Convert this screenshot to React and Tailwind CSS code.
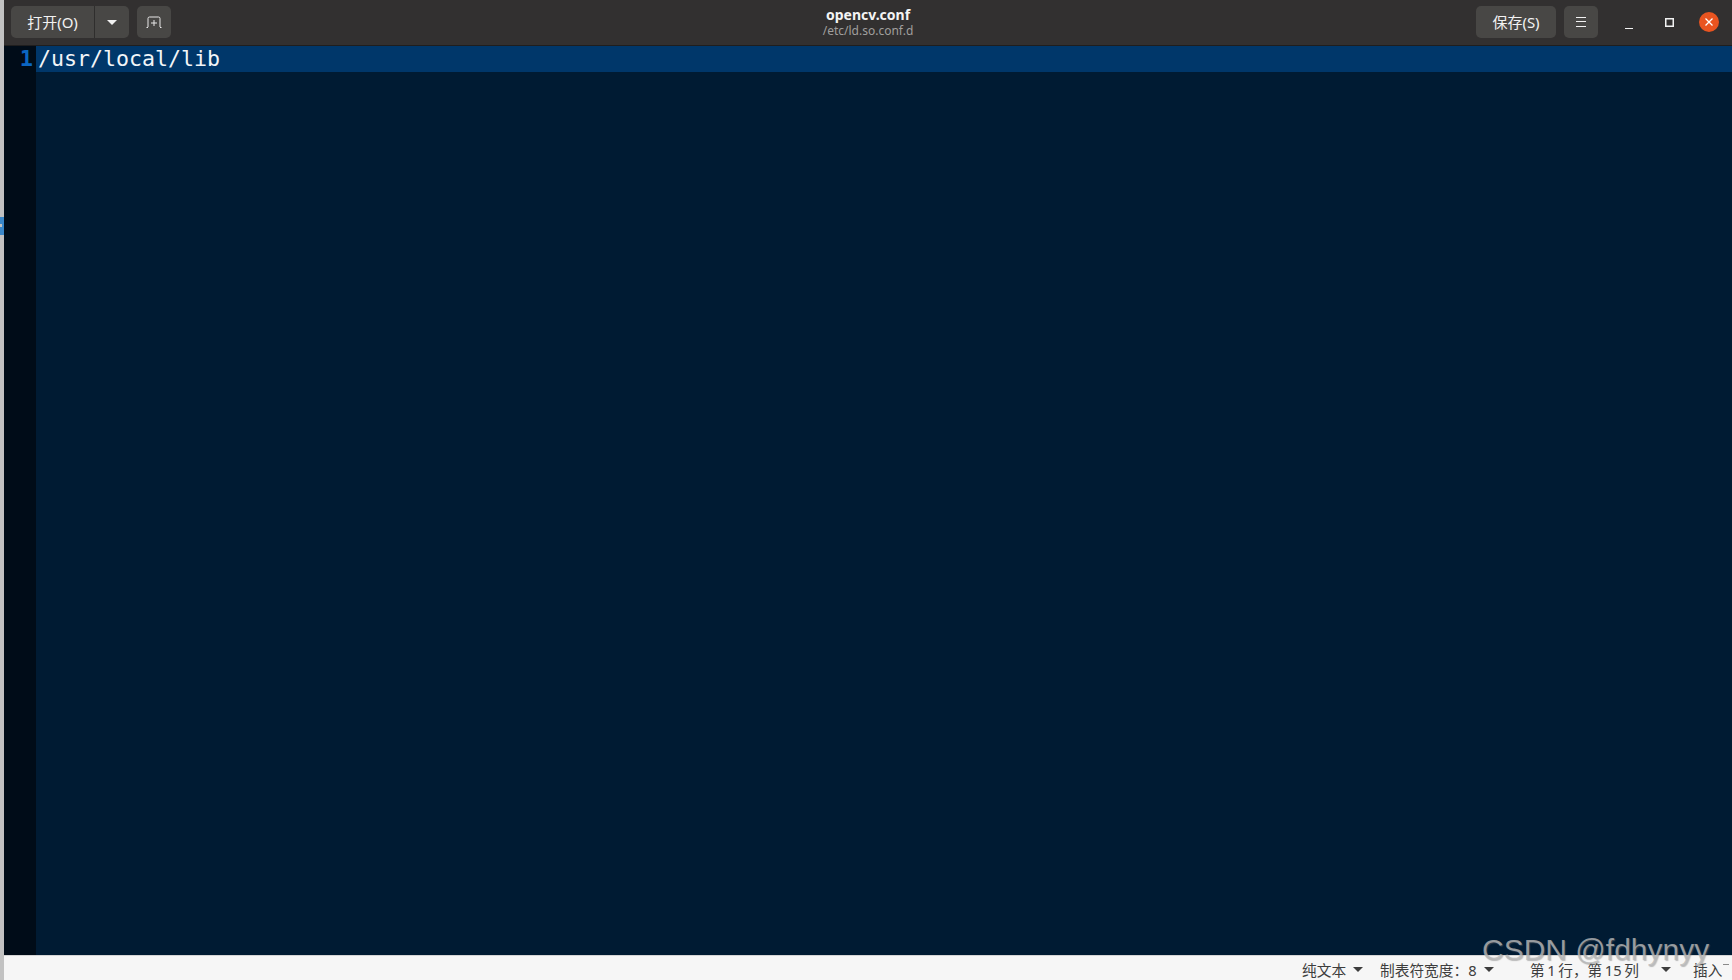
import React from 'react';

const ui = "font-['Noto_Sans','Noto_Sans_CJK_SC',sans-serif]";

const Caret = ({ className }) => (
  <svg className={className} width="10" height="5" viewBox="0 0 10 5"><path d="M0 0h10L5 5z" fill="currentColor" /></svg>
);

const StatusItem = ({ label, caret, className }) => (
  <div className={`flex items-center ${className}`}>
    <span>{label}</span>
    {caret && <Caret className="ml-[7px] text-[#3d3d3d]" />}
  </div>
);

export default function App() {
  return (
    <div className={`relative flex h-[980px] w-[1732px] overflow-hidden bg-[#bdbdbd] ${ui}`}>
      {/* left edge of the window behind */}
      <div className="relative w-1 shrink-0 bg-[#c2c2c2]">
        <div className="absolute left-0 top-[217px] h-[18px] w-1 bg-[#3a87c8]">
          <div className="mt-[7px] h-[3px] w-[2px] bg-[#c2c2c2]" />
        </div>
      </div>

      <div className="flex min-w-0 flex-1 flex-col">
        {/* Header bar */}
        <div className="flex h-[46px] shrink-0 items-center justify-between border-b border-[#1f1e1e] bg-[#323030] pb-[1px] pl-[7px] pr-[13px]">
          <div className="flex items-center">
            <div className="flex h-8 w-[118px] items-stretch rounded-[5px] bg-[#484745] text-[#f2f2f2]">
              <div className="flex w-[84px] items-center justify-center border-r border-[#2f2e2d] text-[15px]">打开(O)</div>
              <div className="flex flex-1 items-center justify-center"><Caret className="text-[#f2f2f2]" /></div>
            </div>
            <div className="ml-2 flex h-8 w-[34px] items-center justify-center rounded-[5px] bg-[#484745] text-[#e8e8e8]">
              <svg width="16" height="12" viewBox="0 0 16 12" fill="none" stroke="currentColor" strokeWidth="1">
                <path d="M2 11V2.500A1.500 1.500 0 0 1 3.500 1h9A1.500 1.500 0 0 1 14 2.500V11M.5 11.500H2M14 11.500h1.500M8 4v6M5 7h6" />
              </svg>
            </div>
          </div>

          <div className="absolute left-[768px] top-[6px] flex w-[200px] flex-col items-center">
            <span className="text-[14px] font-bold leading-[18px] text-[#f4f4f4]">opencv.conf</span>
            <span className="text-[12px] leading-[14px] text-[#a09f9d]">/etc/ld.so.conf.d</span>
          </div>

          <div className="flex items-center">
            <div className="flex h-8 w-[80px] items-center justify-center rounded-[5px] bg-[#484745] text-[15px] text-[#f2f2f2]">保存(S)</div>
            <div className="ml-2 flex h-8 w-[34px] items-center justify-center rounded-[5px] bg-[#484745]">
              <svg width="12" height="10" viewBox="0 0 12 10" stroke="#f2f2f2" strokeWidth="1"><path d="M1 .5h10M1 4.500h10M1 9.500h10" /></svg>
            </div>
            <div className="ml-[19px] flex w-[24px] justify-center pt-[4px]">
              <svg width="8" height="10" viewBox="0 0 8 10" stroke="#f2f2f2" strokeWidth="1"><path d="M0 9.500h8" /></svg>
            </div>
            <div className="ml-[16px] flex w-[24px] justify-center">
              <svg width="9" height="9" viewBox="0 0 9 9" fill="none" stroke="#f2f2f2" strokeWidth="1.500"><rect x=".75" y=".75" width="7.500" height="7.500" /></svg>
            </div>
            <div className="ml-[18px] flex h-5 w-5 items-center justify-center rounded-full bg-[#e95420]">
              <svg width="8" height="8" viewBox="0 0 8 8" stroke="#fff" strokeWidth="1.300"><path d="M.5.5l7 7M7.500.5l-7 7" /></svg>
            </div>
          </div>
        </div>

        {/* Editor */}
        <div className="flex min-h-0 flex-1 bg-[#001b33]">
          <div className="w-8 shrink-0 bg-[#000c18]">
            <div className="h-[26px] pr-[3px] text-right font-['DejaVu_Sans_Mono',monospace] text-[22px] font-bold leading-[26px] text-[#0b66c3]">1</div>
          </div>
          <div className="min-w-0 flex-1">
            <div className="h-[26px] bg-[#00376a] pl-[2px] font-['DejaVu_Sans_Mono',monospace] text-[21.600px] leading-[26px] text-[#f2f5f8]">/usr/local/lib</div>
          </div>
        </div>

        {/* Status bar */}
        <div className="relative flex h-[25px] shrink-0 items-center border-t border-[#d5d5d5] bg-[#f6f6f6] pt-[3px] text-[14.700px] leading-[20px] text-[#3d3d3d]">
          <StatusItem label="纯文本" caret className="ml-[1298px] w-[78px]" />
          <StatusItem label="制表符宽度：8" caret className="w-[150px]" />
          <StatusItem label="第 1 行，第 15 列" className="w-[131px] [word-spacing:-1.250px]" />
          <Caret className="mr-[22px] text-[#3d3d3d]" />
          <span>插入</span>
          <div className="absolute left-[1719px] top-[8px] h-px w-[6px] bg-[#8a8a8a]" />
        </div>
      </div>

      {/* Watermark */}
      <div className="absolute left-[1482px] top-[932px] font-['Liberation_Sans',sans-serif] text-[30px] leading-[35px] text-[#b8b8b8c8] [text-shadow:1px_1px_1px_#70707070]">CSDN @fdhynyy</div>
    </div>
  );
}
